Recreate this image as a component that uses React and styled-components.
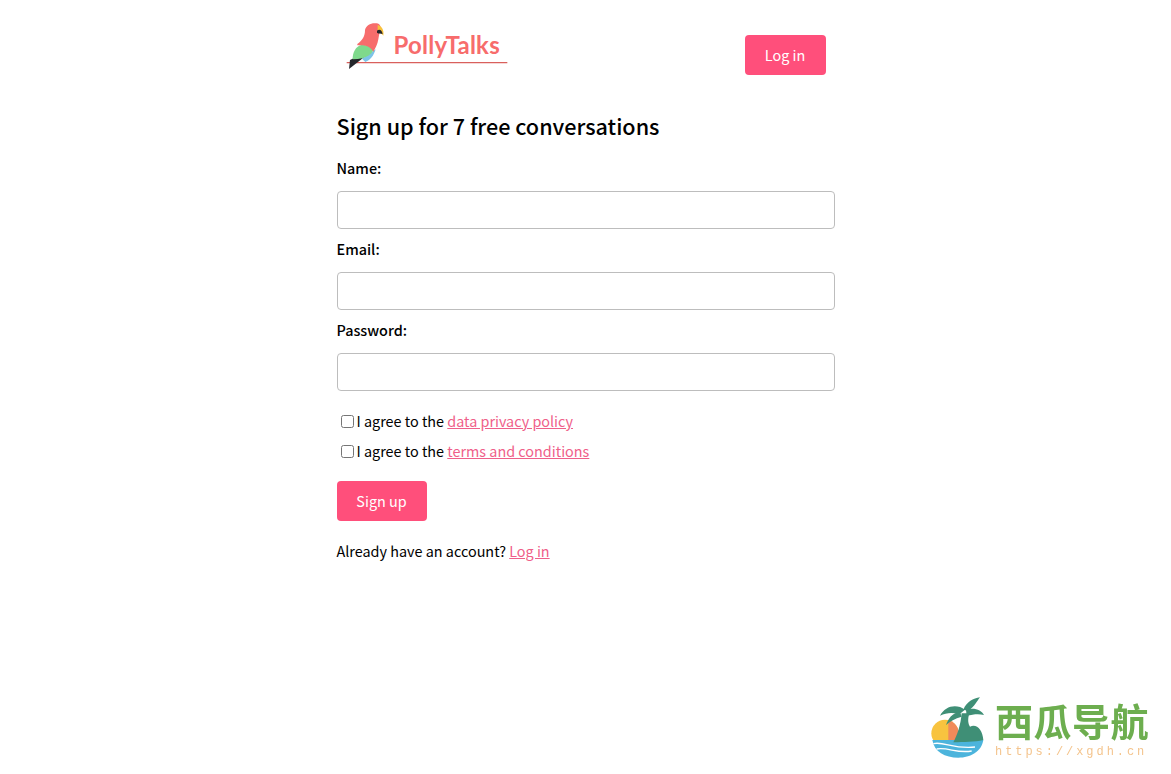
import React from 'react';
import styled, { createGlobalStyle } from 'styled-components';

const GlobalStyle = createGlobalStyle`
  html, body {
    margin: 0;
    padding: 0;
    background: #fff;
    color: #000;
    font-family: "Noto Sans CJK SC", "Noto Sans", sans-serif;
    font-size: 14.4px;
  }
  #root {
    min-height: 774px;
  }
`;

const Page = styled.div`
  width: 498px;
  margin: 0 auto;
  display: flex;
  flex-direction: column;
`;

const Header = styled.header`
  display: flex;
  justify-content: space-between;
  align-items: flex-start;
  height: 91px;
  padding: 10px 9px 0 0;
  box-sizing: border-box;
`;

const LogoWrap = styled.div`
  position: relative;
  width: 200px;
  height: 75px;
  margin-left: -7px;
`;

const LogoText = styled.span`
  position: absolute;
  left: 64px;
  top: 19px;
  font-family: "Lato", sans-serif;
  font-weight: 700;
  font-size: 24px;
  line-height: 32px;
  letter-spacing: 0.25px;
  color: #f76c6c;
`;

const Button = styled.button`
  height: 40px;
  width: ${(p) => p.$width}px;
  margin-top: ${(p) => p.$top || 0}px;
  border: none;
  border-radius: 4px;
  background: #ff4f7b;
  color: #fff;
  font-family: inherit;
  font-size: 14.4px;
  padding: 0 0 1px;
`;

const Title = styled.h1`
  margin: 18px 0 0;
  font-size: 21.6px;
  line-height: 34px;
  font-weight: 500;
`;

const Form = styled.form`
  display: flex;
  flex-direction: column;
  margin-top: 13px;
`;

const Field = styled.div`
  display: flex;
  flex-direction: column;
  height: 81px;
`;

const Label = styled.label`
  font-size: 14.4px;
  font-weight: 500;
  line-height: 24px;
  margin-bottom: 11px;
`;

const Input = styled.input`
  height: 38px;
  box-sizing: border-box;
  border: 1px solid #bdbdbd;
  border-radius: 4px;
  background: #fff;
  padding: 0 10px;
`;

const Checks = styled.div`
  display: flex;
  flex-direction: column;
  margin-top: 7px;
`;

const Agree = styled.label`
  display: flex;
  align-items: center;
  height: 30px;
  line-height: 30px;
  padding-left: 4px;
  white-space: pre;
`;

const Box = styled.input.attrs({ type: 'checkbox' })`
  width: 13px;
  height: 13px;
  margin: 0 3px 0 0;
`;

const TextLink = styled.a`
  color: #ef5f8a;
  text-decoration: underline;
`;

const Footnote = styled.p`
  margin: 18px 0 0;
  line-height: 24px;
`;

const Watermark = styled.div`
  position: fixed;
  right: 21px;
  bottom: 14px;
  display: flex;
  align-items: flex-start;
  gap: 10px;
`;

const MarkText = styled.div`
  display: flex;
  flex-direction: column;
  width: 155px;
  padding-top: 6px;
`;

const MarkTitle = styled.span`
  font-family: "Noto Sans CJK SC", sans-serif;
  font-weight: 700;
  font-size: 38px;
  line-height: 38px;
  letter-spacing: 0.5px;
  white-space: nowrap;
  color: #6dae4f;
`;

const MarkUrl = styled.span`
  margin-top: 6px;
  font-family: "Liberation Mono", monospace;
  font-size: 12px;
  line-height: 14px;
  letter-spacing: 2.95px;
  white-space: nowrap;
  color: #f4c48d;
`;

const Parrot = () => (
  <svg width="200" height="75" viewBox="0 0 600 225" style={{ position: 'absolute', left: 0, top: 0 }}>
    <path d="M50 158 H532" stroke="#d9605c" strokeWidth="4" />
    <path d="M102 142 L57 177 L60 150 L85 138Z" fill="#23262b" />
    <path d="M137 118 C132 135 122 150 106 156 L96 146Z" fill="#7cc4e8" />
    <path d="M68 142 C70 118 84 104 100 104 L132 112 C130 130 112 148 68 148Z" fill="#7fd98c" />
    <path d="M82 102 C96 92 105 80 105 60 C108 45 125 37 140 40 C150 42 155 50 150 62 C148 72 146 80 145 88 C143 102 136 115 130 125 C120 106 100 104 82 106Z" fill="#f76c6c" />
    <path d="M143 45 C155 48 163 60 160 77 C155 70 150 68 143 65Z" fill="#f8c23c" />
    <path d="M141 62 C148 56 156 60 158 72 C152 70 146 72 141 68Z" fill="#26262a" />
  </svg>
);

const Palm = () => (
  <svg width="55" height="65" viewBox="30 30 165 195">
    <circle cx="75" cy="145" r="41" fill="#f8c33f" />
    <path d="M85 106 A41 41 0 0 1 112 165 L85 165Z" fill="#f08a5a" />
    <path d="M37 165 H190 C185 200 150 218 115 218 C75 218 42 200 37 165Z" fill="#4cb4dc" />
    <path d="M40 176 C70 168 100 193 165 186" stroke="#fff" strokeWidth="4" fill="none" />
    <path d="M50 192 C85 186 110 206 155 198" stroke="#fff" strokeWidth="4" fill="none" />
    <path d="M135 74 C110 55 75 62 60 92 C80 82 100 82 118 88Z" fill="#3f8f76" />
    <path d="M120 80 C95 85 85 100 78 120 C90 110 105 100 125 95Z" fill="#3f8f76" />
    <path d="M130 74 C140 50 160 40 180 37 C170 50 165 62 145 78Z" fill="#3f8f76" />
    <path d="M138 75 C160 65 185 75 192 90 C175 85 160 88 140 92Z" fill="#3f8f76" />
    <path d="M125 85 L148 85 C142 105 145 118 150 125 C170 115 188 135 190 165 C165 172 130 170 100 172 C112 150 122 120 125 85Z" fill="#3f8f76" />
  </svg>
);

export default function App() {
  return (
    <>
      <GlobalStyle />
      <Page>
        <Header>
          <LogoWrap>
            <Parrot />
            <LogoText>PollyTalks</LogoText>
          </LogoWrap>
          <Button type="button" $width={81} $top={25}>Log in</Button>
        </Header>
        <Title>Sign up for 7 free conversations</Title>
        <Form onSubmit={(e) => e.preventDefault()}>
          <Field>
            <Label>Name:</Label>
            <Input type="text" />
          </Field>
          <Field>
            <Label>Email:</Label>
            <Input type="email" />
          </Field>
          <Field>
            <Label>Password:</Label>
            <Input type="password" />
          </Field>
          <Checks>
            <Agree><Box />I agree to the <TextLink href="#">data privacy policy</TextLink></Agree>
            <Agree><Box />I agree to the <TextLink href="#">terms and conditions</TextLink></Agree>
          </Checks>
          <Button type="submit" $width={90} $top={15}>Sign up</Button>
        </Form>
        <Footnote>Already have an account? <TextLink href="#">Log in</TextLink></Footnote>
      </Page>
      <Watermark>
        <Palm />
        <MarkText>
          <MarkTitle>西瓜导航</MarkTitle>
          <MarkUrl>https://xgdh.cn</MarkUrl>
        </MarkText>
      </Watermark>
    </>
  );
}
